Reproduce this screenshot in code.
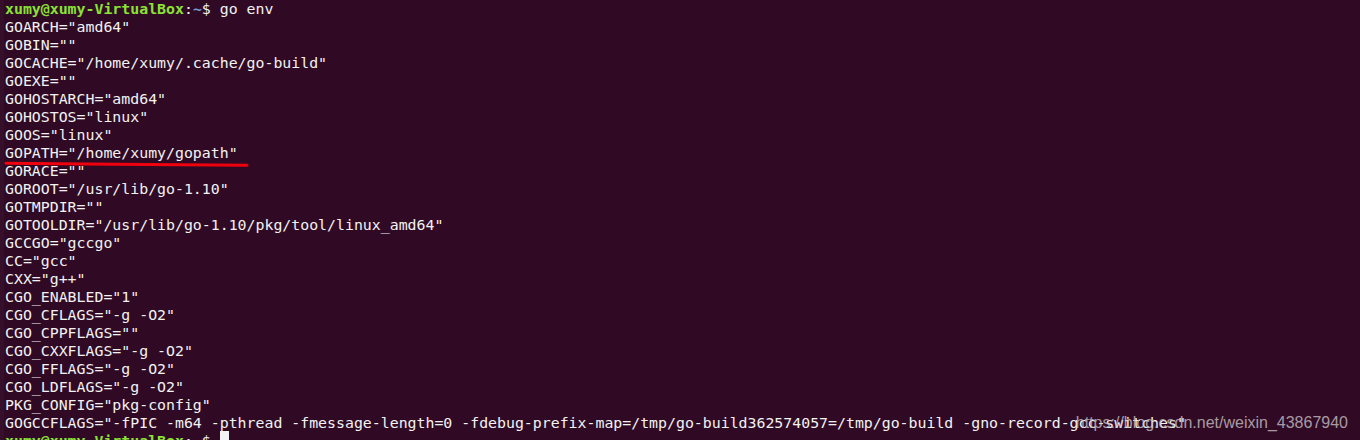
import React from "react";

const lines: string[] = [
  'GOARCH="amd64"',
  'GOBIN=""',
  'GOCACHE="/home/xumy/.cache/go-build"',
  'GOEXE=""',
  'GOHOSTARCH="amd64"',
  'GOHOSTOS="linux"',
  'GOOS="linux"',
  'GOPATH="/home/xumy/gopath"',
  'GORACE=""',
  'GOROOT="/usr/lib/go-1.10"',
  'GOTMPDIR=""',
  'GOTOOLDIR="/usr/lib/go-1.10/pkg/tool/linux_amd64"',
  'GCCGO="gccgo"',
  'CC="gcc"',
  'CXX="g++"',
  'CGO_ENABLED="1"',
  'CGO_CFLAGS="-g -O2"',
  'CGO_CPPFLAGS=""',
  'CGO_CXXFLAGS="-g -O2"',
  'CGO_FFLAGS="-g -O2"',
  'CGO_LDFLAGS="-g -O2"',
  'PKG_CONFIG="pkg-config"',
  'GOGCCFLAGS="-fPIC -m64 -pthread -fmessage-length=0 -fdebug-prefix-map=/tmp/go-build362574057=/tmp/go-build -gno-record-gcc-switches"',
];

function Prompt({ children }: { children?: React.ReactNode }) {
  return (
    <div className="h-[18px] whitespace-pre">
      <span className="font-bold text-[#8ae234]">xumy@xumy-VirtualBox</span>
      <span className="text-[#f2f2f2]">:</span>
      <span className="font-bold text-[#729fcf]">~</span>
      <span className="text-[#f2f2f2]">$ </span>
      {children}
    </div>
  );
}

export default function App() {
  return (
    <div className="relative h-[440px] w-[1360px] overflow-hidden bg-[#300a24]">
      <div className="absolute left-0 top-0 h-full w-[4px] bg-[#36102b]" />
      <div
        className="pl-[5px] text-[14.87px] leading-[18px] text-[#f2f2f2]"
        style={{ fontFamily: '"DejaVu Sans Mono", "Liberation Mono", monospace' }}
      >
        <Prompt>
          <span>go env</span>
        </Prompt>
        {lines.map((l, i) => (
          <div key={i} className="h-[18px] whitespace-pre">
            {l}
          </div>
        ))}
        <Prompt>
          <span className="inline-block h-[18px] w-[9px] translate-y-[-1px] bg-[#f2f2f2] align-top" />
        </Prompt>
      </div>
      <svg
        className="pointer-events-none absolute left-0 top-[158px]"
        width="260"
        height="12"
        viewBox="0 0 260 12"
      >
        <path
          d="M6 5.3 C 80 6.2, 180 6.6, 247 7.2"
          stroke="#f0000c"
          strokeWidth="3"
          strokeLinecap="round"
          fill="none"
        />
      </svg>
      <div
        className="pointer-events-none absolute right-[12px] top-[412px] text-[16px] leading-[22px] text-[#c9c2c7]/80"
        style={{ fontFamily: '"Liberation Sans", Arial, sans-serif' }}
      >
        https://blog.csdn.net/weixin_43867940
      </div>
    </div>
  );
}
